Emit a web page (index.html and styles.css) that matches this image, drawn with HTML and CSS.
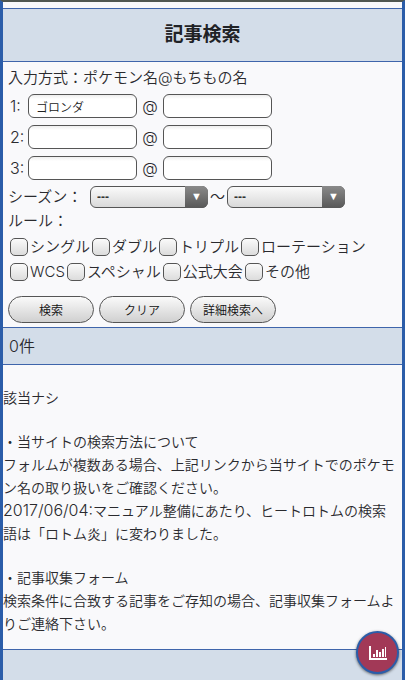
FILE: index.html
```
<!DOCTYPE html>
<html lang="ja">
<head>
  <meta charset="UTF-8">
  <meta name="viewport" content="width=device-width, initial-scale=1">
  <title>記事検索</title>
  <link rel="stylesheet" href="styles.css">
</head>
<body>
  <div class="page">
    <h1 class="title">記事検索</h1>

    <!-- 検索フォーム -->
    <form class="search">
      <p class="guide">入力方式：ポケモン名@もちもの名</p>
      <div class="poke-row">
        <label for="poke1">1:</label>
        <input type="text" id="poke1" value="ゴロンダ">
        <label for="item1">@</label>
        <input type="text" id="item1">
      </div>
      <div class="poke-row">
        <label for="poke2">2:</label>
        <input type="text" id="poke2">
        <label for="item2">@</label>
        <input type="text" id="item2">
      </div>
      <div class="poke-row">
        <label for="poke3">3:</label>
        <input type="text" id="poke3">
        <label for="item3">@</label>
        <input type="text" id="item3">
      </div>

      <div class="season">
        <label for="season-from">シーズン：</label>
        <span class="select"><select id="season-from"><option>---</option></select></span>
        <label class="tilde" for="season-to">～</label>
        <span class="select"><select id="season-to"><option>---</option></select></span>
      </div>

      <p class="rule-title">ルール：</p>
      <div class="rules">
        <label><input type="checkbox">シングル</label>
        <label><input type="checkbox">ダブル</label>
        <label><input type="checkbox">トリプル</label>
        <label><input type="checkbox">ローテーション</label>
      </div>
      <div class="rules">
        <label><input type="checkbox">WCS</label>
        <label><input type="checkbox">スペシャル</label>
        <label><input type="checkbox">公式大会</label>
        <label><input type="checkbox">その他</label>
      </div>

      <div class="buttons">
        <button type="button">検索</button>
        <button type="button">クリア</button>
        <button type="button">詳細検索へ</button>
      </div>
    </form>

    <!-- 検索結果 -->
    <h2 class="count">0件</h2>
    <div class="result">
      <p>該当ナシ</p>
      <p>・当サイトの検索方法について<br>
        フォルムが複数ある場合、上記リンクから当サイトでのポケモン名の取り扱いをご確認ください。<br>
        <span class="date">2017/06/04:</span>マニュアル整備にあたり、ヒートロトムの検索<br>語は「ロトム炎」に変わりました。</p>
      <p>・記事収集フォーム<br>
        検索条件に合致する記事をご存知の場合、記事収集フォームよりご連絡下さい。</p>
    </div>
    <div class="footer"></div>
  </div>

  <button type="button" class="chart-button" aria-label="グラフ">
    <svg viewBox="0 0 18 14" width="18" height="14">
      <path d="M1 0v13h17" fill="none" stroke="#fff" stroke-width="2"/>
      <path d="M4 8h2v3H4zM7 4h2v7H7zM10 6h2v5h-2zM13 3h2v8h-2zM16 1h1v10h-1z" fill="#fff"/>
    </svg>
  </button>
</body>
</html>
```
FILE: styles.css
```
* {
  box-sizing: border-box;
}

body {
  margin: 0;
  background: #f9f9fb;
  color: #2a2a2e;
  font-family: Inter, "Noto Sans CJK JP", sans-serif;
  font-size: 15px;
  font-weight: 350;
}

p, h1, h2 {
  margin: 0;
}

.page {
  display: flex;
  flex-direction: column;
  min-height: 100vh;
  border: solid #2b5da9;
  border-width: 2px 3px 0;
  border-top-color: #505751;
  padding-top: 6px;
}

.title, .count, .footer {
  background: #d3dde9;
  border-top: 1px solid #3f65ab;
}

.title, .count {
  border-bottom: 1px solid #3f65ab;
}

.title {
  padding: 12px 0;
  line-height: 28px;
  font-size: 19px;
  font-weight: bold;
  text-align: center;
  color: #1f2226;
}

/* フォーム */
.search {
  padding: 4px 5px;
}

.guide {
  line-height: 24px;
  margin-bottom: 4px;
}

.poke-row {
  display: flex;
  align-items: center;
  margin-bottom: 7px;
}

.poke-row label {
  width: 26px;
  text-align: center;
  font-size: 16px;
  line-height: 24px;
}

.poke-row label:first-child {
  width: 20px;
  text-align: left;
  padding-left: 2px;
}

.poke-row input {
  width: 109px;
  height: 24px;
  padding: 0 7px;
  border: 1px solid #555;
  border-radius: 6px;
  background: linear-gradient(#eee, #fff 4px);
  font: inherit;
  font-size: 12px;
  color: #222;
}

.season {
  display: flex;
  align-items: center;
  margin-top: -1px;
}

.season label {
  width: 82px;
  line-height: 22px;
}

.season .tilde {
  width: 19px;
  padding-left: 2px;
}

.select {
  position: relative;
  width: 118px;
  height: 22px;
}

.select select {
  appearance: none;
  width: 100%;
  height: 100%;
  padding: 0 6px;
  border: 1px solid #555;
  border-radius: 6px;
  background: linear-gradient(#fafafa, #d9d9d9);
  font: bold 12px "Liberation Sans", sans-serif;
  color: #333;
}

.select::after {
  content: "▼";
  position: absolute;
  top: 0;
  right: 0;
  width: 23px;
  height: 100%;
  border-radius: 0 6px 6px 0;
  background: linear-gradient(#8a8a8a, #585858);
  color: #fff;
  font-family: "DejaVu Sans", sans-serif;
  font-size: 11px;
  line-height: 22px;
  text-align: center;
  pointer-events: none;
}

.rule-title {
  line-height: 26px;
}

.rules {
  display: flex;
  flex-wrap: wrap;
  gap: 2px;
  padding-left: 2px;
  line-height: 25px;
}

.rules + .rules {
  margin-bottom: 12px;
}

.rules label {
  display: flex;
  align-items: center;
  gap: 2px;
}

.rules input {
  appearance: none;
  width: 18px;
  height: 18px;
  margin: 0;
  border: 1px solid #555;
  border-radius: 5px;
  background: linear-gradient(#fafafa, #dcdcdc);
}

.rules input:checked {
  background: #888;
}

.buttons {
  display: flex;
  gap: 5px;
}

.buttons button {
  width: 86px;
  height: 27px;
  padding: 0;
  border: 1px solid #555;
  border-radius: 14px;
  background: linear-gradient(#fafafa, #d0d0d0);
  font: inherit;
  font-size: 12px;
  color: #111;
}

/* 結果 */
.count {
  padding: 0 6px;
  line-height: 36px;
  font-size: 16px;
  font-weight: inherit;
}

.result {
  display: flex;
  flex-direction: column;
  gap: 21px;
  padding: 21px 0 14px;
  font-size: 14px;
  line-height: 23px;
}

.date {
  font-size: 16px;
}

.footer {
  flex: 1;
  min-height: 30px;
}

.chart-button {
  position: fixed;
  right: 6px;
  bottom: 6px;
  display: flex;
  align-items: center;
  justify-content: center;
  width: 43px;
  height: 43px;
  padding: 0;
  border: 2px solid #2b5da9;
  border-radius: 50%;
  background: #a23957;
  box-shadow: 0 1px 3px rgba(0, 0, 0, 0.6);
}
```
